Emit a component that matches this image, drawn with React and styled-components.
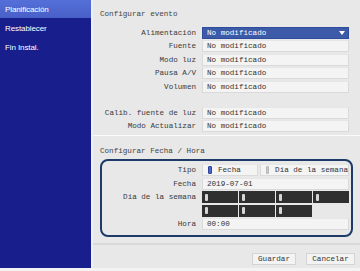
import React from 'react';
import styled, { createGlobalStyle } from 'styled-components';

const GlobalStyle = createGlobalStyle`
  * {
    margin: 0;
    padding: 0;
    box-sizing: border-box;
  }
  body {
    background: #f3f3f3;
    font-family: "Liberation Mono", monospace;
  }
`;

const Page = styled.div`
  display: flex;
  width: 360px;
  height: 268px;
  overflow: hidden;
`;

const Sidebar = styled.nav`
  width: 93px;
  flex-shrink: 0;
  background: #181e8c;
  border-right: 2px solid #eef0f6;
  display: flex;
  flex-direction: column;
  gap: 1px;
`;

const NavItem = styled.div`
  height: 18px;
  padding-left: 5px;
  display: flex;
  align-items: center;
  font-family: "Liberation Sans", Arial, sans-serif;
  font-size: 8px;
  letter-spacing: -0.1px;
  color: #ffffff;
  background: ${(p) => (p.active ? 'linear-gradient(#5470d8, #4860c8)' : 'transparent')};
`;

const Main = styled.main`
  flex: 1;
  display: flex;
  flex-direction: column;
  background: #e8e8e8;
  color: #333;
  font-size: 7.6px;
`;

const Section = styled.section`
  height: ${(p) => p.h}px;
  padding: 0 7px 0 7px;
  border-bottom: 1px solid ${(p) => p.line || '#fafafa'};
`;

const Title = styled.div`
  height: 14px;
  margin-top: ${(p) => p.top}px;
  display: flex;
  align-items: center;
  color: #444;
`;

const Rows = styled.div`
  display: grid;
  grid-template-columns: 96px 147px;
  column-gap: 6px;
  row-gap: 1.4px;
  margin-top: ${(p) => p.top || 0}px;
`;

const Label = styled.div`
  height: 12px;
  display: flex;
  align-items: center;
  justify-content: flex-end;
  white-space: nowrap;
  color: #3a3a3a;
`;

const Value = styled.div`
  height: 12px;
  display: flex;
  align-items: center;
  padding-left: 4px;
  background: #f4f4f4;
  border: 1px solid #dadada;
  border-top-color: #e6e6e6;
  white-space: nowrap;
`;

const Select = styled(Value)`
  background: #3c5aa8;
  border-color: #2e4c9c;
  color: #ffffff;
  justify-content: space-between;
  padding-right: 3px;
`;

const Caret = styled.span`
  width: 0;
  height: 0;
  border-left: 3px solid transparent;
  border-right: 3px solid transparent;
  border-top: 4px solid #ffffff;
`;

const DateBox = styled.div`
  margin-top: 1px;
  width: 253px;
  height: 78px;
  border: 2px solid #1d3a68;
  border-radius: 8px;
  padding: 3px 2px 0 0;
`;

const DateRows = styled(Rows)`
  grid-template-columns: 94px 147px;
  row-gap: 1.6px;
`;

const TypeRow = styled.div`
  display: flex;
  gap: 2px;
`;

const TypeOpt = styled(Value)`
  width: ${(p) => p.w}px;
  padding-left: 5px;
  gap: 6px;
`;

const Marker = styled.span`
  width: 4px;
  height: 8px;
  border-radius: 1px;
  background: ${(p) => (p.on ? '#4c66c4' : '#c8c8c8')};
  border: 1px solid ${(p) => (p.on ? '#2d4599' : '#b8b8b8')};
`;

const DayGrid = styled.div`
  display: grid;
  grid-template-columns: repeat(4, 1fr);
  column-gap: 1px;
  height: 12px;
`;

const DayCell = styled.div`
  background: ${(p) => (p.empty ? 'transparent' : '#2f2f2f')};
  display: flex;
  align-items: center;
  padding-left: 3px;
`;

const DayTick = styled.span`
  width: 3px;
  height: 7px;
  background: #d6d6d6;
  border-radius: 1px;
`;

const Footer = styled.footer`
  flex: 1;
  display: flex;
  justify-content: flex-end;
  align-items: flex-start;
  gap: 10px;
  padding: 8px 5px 0 0;
  border-top: 1px solid #d9d9d9;
`;

const Button = styled.button`
  width: ${(p) => p.w}px;
  height: 12px;
  background: #f3f3f3;
  border: 1px solid #d4d4d4;
  font-family: "Liberation Mono", monospace;
  font-size: 7.6px;
  color: #333;
`;

const events = ['Fuente', 'Modo luz', 'Pausa A/V', 'Volumen'];

export default function App() {
  return (
    <>
      <GlobalStyle />
      <Page>
        <Sidebar>
          <NavItem active>Planificación</NavItem>
          <NavItem>Restablecer</NavItem>
          <NavItem>Fin Instal.</NavItem>
        </Sidebar>
        <Main>
          <Section h={136}>
            <Title top={7}>Configurar evento</Title>
            <Rows top={6}>
              <Label>Alimentación</Label>
              <Select>
                No modificado
                <Caret />
              </Select>
              {events.map((e) => (
                <React.Fragment key={e}>
                  <Label>{e}</Label>
                  <Value>No modificado</Value>
                </React.Fragment>
              ))}
            </Rows>
            <Rows top={14}>
              <Label>Calib. fuente de luz</Label>
              <Value>No modificado</Value>
              <Label>Modo Actualizar</Label>
              <Value>No modificado</Value>
            </Rows>
          </Section>
          <Section h={108} line="#d9d9d9">
            <Title top={8}>Configurar Fecha / Hora</Title>
            <DateBox>
              <DateRows>
                <Label>Tipo</Label>
                <TypeRow>
                  <TypeOpt w={56}><Marker on />Fecha</TypeOpt>
                  <TypeOpt w={89}><Marker />Día de la semana</TypeOpt>
                </TypeRow>
                <Label>Fecha</Label>
                <Value>2019-07-01</Value>
                <Label>Día de la semana</Label>
                <DayGrid>
                  {[0, 1, 2, 3].map((i) => (
                    <DayCell key={i}><DayTick /></DayCell>
                  ))}
                </DayGrid>
                <Label />
                <DayGrid>
                  {[0, 1, 2].map((i) => (
                    <DayCell key={i}><DayTick /></DayCell>
                  ))}
                  <DayCell empty />
                </DayGrid>
                <Label>Hora</Label>
                <Value>00:00</Value>
              </DateRows>
            </DateBox>
          </Section>
          <Footer>
            <Button w={44}>Guardar</Button>
            <Button w={49}>Cancelar</Button>
          </Footer>
        </Main>
      </Page>
    </>
  );
}
